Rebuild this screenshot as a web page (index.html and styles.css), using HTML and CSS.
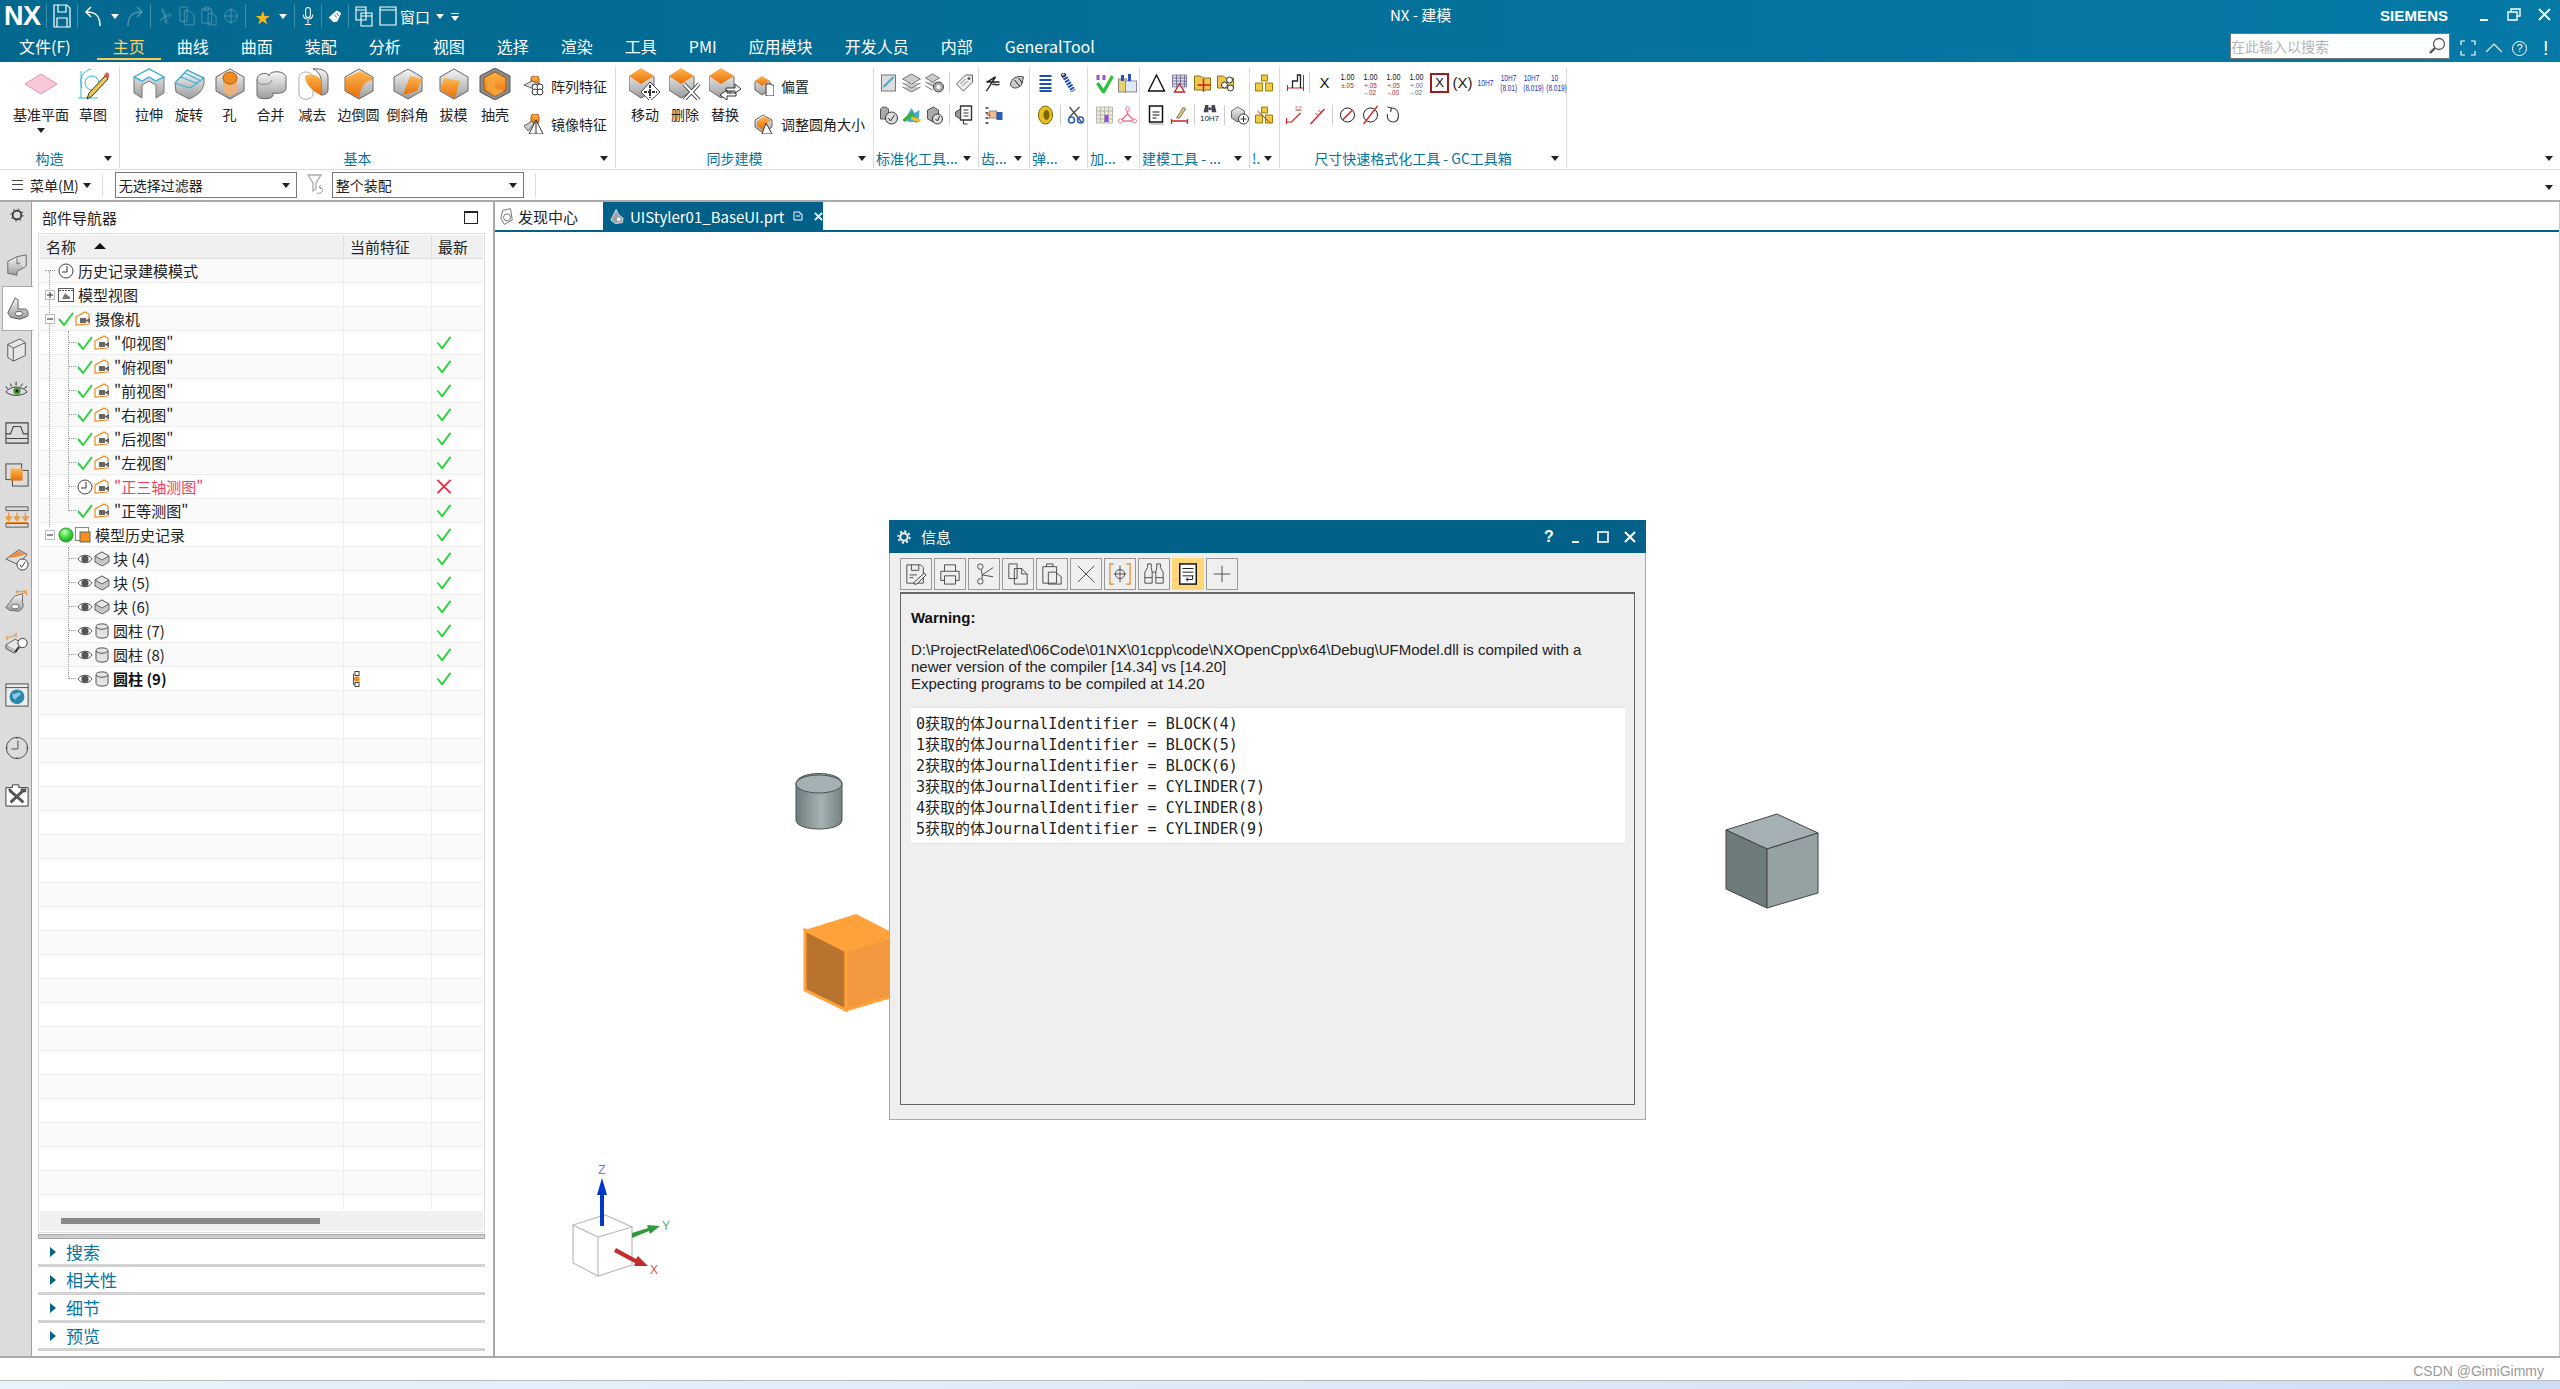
FILE: index.html
```html
<!DOCTYPE html>
<html lang="zh">
<head>
<meta charset="utf-8">
<title>NX - 建模</title>
<link rel="stylesheet" href="styles.css">
</head>
<body>
<svg class="defs" width="0" height="0" aria-hidden="true">
  <defs>
    <linearGradient id="gg" x1="0" y1="0" x2="0" y2="1"><stop offset="0" stop-color="#f6f6f6"/><stop offset="1" stop-color="#9c9c9c"/></linearGradient>
    <linearGradient id="go" x1="0" y1="0" x2="0" y2="1"><stop offset="0" stop-color="#ffb650"/><stop offset="1" stop-color="#e86f08"/></linearGradient>
    <linearGradient id="gc" x1="0" y1="0" x2="1" y2="0"><stop offset="0" stop-color="#6f7b7d"/><stop offset=".55" stop-color="#a6b2b3"/><stop offset="1" stop-color="#76827f"/></linearGradient>
    <radialGradient id="gd" cx=".4" cy=".3" r=".8"><stop offset="0" stop-color="#c8ffc0"/><stop offset=".5" stop-color="#3fd63a"/><stop offset="1" stop-color="#129a1c"/></radialGradient>

    <symbol id="s-datum" viewBox="0 0 32 32"><path d="M0 16 16 6 32 16 16 26Z" fill="#f8c8da" stroke="#e58fb2"/></symbol>
    <symbol id="s-sketch" viewBox="0 0 32 32"><path d="M14 1C5 3 2 12 5 20M4 30V3M1 30h20" fill="none" stroke="#35b4dc"/><circle cx="15" cy="15" r="7" fill="none" stroke="#35b4dc"/><path d="M28 8 31 11 15 28 10 31 12 25Z" fill="#f4c64c" stroke="#333"/><path d="M27 7 30 4 33 7 31 11Z" fill="#e06060"/></symbol>
    <symbol id="s-extrude" viewBox="0 0 32 32"><path d="M1 9 16 1 31 9V25L23 30V17L16 13 9 17V30L1 25Z" fill="url(#gg)" stroke="#777"/><path d="M1 9 16 1 31 9 23 13 16 9 9 13Z" fill="#fff" stroke="#35b4dc" stroke-width="1.4"/></symbol>
    <symbol id="s-revolve" viewBox="0 0 32 32"><path d="M2 15 14 2 31 10V15C30 23 24 28 16 31L3 24Z" fill="url(#gg)" stroke="#777"/><path d="M2 15 14 2 31 10 17 20Z M8 9 25 16M12 5 28 13" fill="none" stroke="#35b4dc" stroke-width="1.2"/></symbol>
    <symbol id="s-hole" viewBox="0 0 32 32"><path d="M16 1 30 9V23L16 31 2 23V9Z" fill="url(#gg)" stroke="#666"/><path d="M9 11V24L16 28 23 24V11Z" fill="#ebb27a"/><ellipse cx="16" cy="10" rx="7" ry="6" fill="#f28a1e" stroke="#b25a0a"/></symbol>
    <symbol id="s-unite" viewBox="0 0 32 32"><path d="M2 12C2 4 14 4 14 8 14 2 31 2 31 10V20C31 25 24 26 18 25V27C18 32 2 32 2 27Z" fill="url(#gg)" stroke="#666"/><path d="M2 12C2 18 16 18 17 12" fill="none" stroke="#888"/></symbol>
    <symbol id="s-subtract" viewBox="0 0 32 32"><path d="M2 10C2 2 16 2 16 10V26C16 33 2 33 2 26Z" fill="#fff" stroke="#aaa"/><path d="M16 1C22 0 31 2 31 9V22C31 25 28 27 24 27V12C24 7 20 2 16 1Z" fill="url(#gg)" stroke="#666"/><path d="M8 8C14 4 24 8 24 14V27C16 24 8 16 8 8Z" fill="url(#go)"/></symbol>
    <symbol id="s-blend" viewBox="0 0 32 32"><path d="M16 1 30 9V23L16 31 2 23V9Z" fill="url(#gg)" stroke="#666"/><path d="M3 10 17 3 29 9V12C22 13 17 20 16 30L3 23Z" fill="url(#go)"/></symbol>
    <symbol id="s-chamfer" viewBox="0 0 32 32"><path d="M16 1 30 9V23L16 31 2 23V9Z" fill="url(#gg)" stroke="#666"/><path d="M18 8 30 11 25 23 11 27Z" fill="url(#go)"/></symbol>
    <symbol id="s-draft" viewBox="0 0 32 32"><path d="M16 1 30 9V23L16 31 2 23V9Z" fill="url(#gg)" stroke="#666"/><path d="M6 10 22 13 17 30 2 22Z" fill="url(#go)"/></symbol>
    <symbol id="s-shell" viewBox="0 0 32 32"><path d="M16 0 31 8V24L16 32 1 24V8Z" fill="#8a8a8a" stroke="#555"/><path d="M16 4 27 10V22L16 28 5 22V10Z" fill="url(#go)" stroke="#a85406"/><path d="M10 12 16 9V20L25 23 16 28 7 22Z" fill="#f9a23a"/></symbol>
    <symbol id="s-move" viewBox="0 0 32 32"><path d="M12 2 25 9V22L12 30 0 22V9Z" fill="url(#gg)" stroke="#666"/><path d="M12 0 25 8 12 16 0 8Z" fill="url(#go)"/><path d="M21 14 31 24 21 33 12 24Z" fill="#fff" stroke="#444"/><path d="M21 17V30M15 24H28" stroke="#333" stroke-width="2" stroke-dasharray="3 1"/></symbol>
    <symbol id="s-delete" viewBox="0 0 32 32"><path d="M12 2 25 9V22L12 30 0 22V9Z" fill="url(#gg)" stroke="#666"/><path d="M12 0 25 8 12 16 0 8Z" fill="url(#go)"/><path d="M15 16 30 32M30 16 15 32" stroke="#444" stroke-width="4"/><path d="M15 16 30 32M30 16 15 32" stroke="#fff" stroke-width="2"/></symbol>
    <symbol id="s-replace" viewBox="0 0 32 32"><path d="M12 2 25 9V22L12 30 0 22V9Z" fill="url(#gg)" stroke="#666"/><path d="M12 0 25 8 12 16 0 8Z" fill="url(#go)"/><path d="M17 20H26V16L32 21 26 25V23H17ZM27 25H18V22L11 27 18 32V28H27Z" fill="#fff" stroke="#333"/></symbol>
    <symbol id="s-offset" viewBox="0 0 20 20"><path d="M8 1 16 6V14L8 19 1 14V6Z" fill="url(#gg)" stroke="#666"/><path d="M8 0 16 5 8 10 1 5Z" fill="url(#go)"/><path d="M12 8H17L20 10V20H12Z" fill="#fff" stroke="#333"/></symbol>
    <symbol id="s-resize" viewBox="0 0 20 20"><path d="M9 1 18 6V13L9 19 1 13V6Z" fill="url(#gg)" stroke="#666"/><path d="M3 7 11 2 17 7C13 8 10 11 9 16L3 12Z" fill="url(#go)"/><path d="M12 9 18 20H8Z" fill="#fff" stroke="#333"/></symbol>
    <symbol id="s-pattern" viewBox="0 0 20 20"><rect x="7" y="0" width="8" height="10" rx="3" fill="url(#go)" stroke="#b25a0a"/><path d="M0 9 8 5 18 9 10 13Z" fill="#ddd" stroke="#666"/><circle cx="11" cy="11" r="3" fill="#fff" stroke="#333"/><circle cx="16" cy="11" r="3" fill="#fff" stroke="#333"/><circle cx="11" cy="16" r="3" fill="#fff" stroke="#333"/><circle cx="16" cy="16" r="3" fill="#fff" stroke="#333"/></symbol>
    <symbol id="s-mirror" viewBox="0 0 20 20"><rect x="7" y="0" width="8" height="10" rx="3" fill="url(#go)" stroke="#b25a0a"/><path d="M0 12 8 7 10 10 4 17Z" fill="#ccc" stroke="#666"/><path d="M12 6 19 20H5Z" fill="#fff" stroke="#333"/><path d="M12 6V20" stroke="#333"/></symbol>

    <symbol id="t-check" viewBox="0 0 16 16"><path d="M1 8 6 14 15 2" fill="none" stroke="#2ad23c" stroke-width="2"/></symbol>
    <symbol id="t-x" viewBox="0 0 16 16"><path d="M1 1 15 15M15 1 1 15" stroke="#f02a3c" stroke-width="2"/></symbol>
    <symbol id="t-clock" viewBox="0 0 16 16"><circle cx="8" cy="8" r="7" fill="#fff" stroke="#444"/><path d="M9 3V9H4" fill="none" stroke="#333"/></symbol>
    <symbol id="t-cam" viewBox="0 0 16 16"><path d="M1 6 10 1 14 3V13L1 14Z" fill="#fff" stroke="#ee8a1c" stroke-width="1.2"/><path d="M5 7H11V12H5ZM11 9 15 7V12L11 10Z" fill="#666"/></symbol>
    <symbol id="t-view" viewBox="0 0 16 16"><rect x=".5" y="1.5" width="15" height="13" fill="#fff" stroke="#555"/><path d="M1 3.5H15" stroke="#555" stroke-dasharray="2 1"/><path d="M4 12 7 6 9 8 12 10V12Z" fill="#777"/></symbol>
    <symbol id="t-hist" viewBox="0 0 16 16"><rect x=".5" y=".5" width="13" height="13" fill="#fff" stroke="#888"/><rect x="5" y="5" width="10" height="10" fill="#f4901e" stroke="#666"/></symbol>
    <symbol id="t-eye" viewBox="0 0 16 16"><path d="M1 8C4 3 12 3 15 8 12 13 4 13 1 8Z" fill="#fff" stroke="#555"/><circle cx="8" cy="8" r="3.6" fill="#555"/></symbol>
    <symbol id="t-block" viewBox="0 0 16 16"><path d="M8 1 15 5V11L8 15 1 11V5Z" fill="#c8c8c8" stroke="#666"/><path d="M1 5 8 9 15 5 8 1Z" fill="#e8e8e8" stroke="#666"/></symbol>
    <symbol id="t-cyl" viewBox="0 0 16 16"><path d="M2 3.5C2 0 14 0 14 3.5V12.5C14 16 2 16 2 12.5Z" fill="#e2e2e2" stroke="#555"/><path d="M2 4C4 7 12 7 14 4" fill="none" stroke="#555"/></symbol>
    <symbol id="t-node" viewBox="0 0 8 16"><path d="M1.5 2.5V13.5H3M1.5 8H3" fill="none" stroke="#555"/><rect x="3" y=".5" width="4" height="4" fill="#fff" stroke="#444"/><rect x="3" y="6" width="4" height="4" fill="#f08a1c" stroke="#f08a1c"/><rect x="3" y="11.5" width="4" height="4" fill="#fff" stroke="#444"/></symbol>
  </defs>
</svg>

<div class="app">
  <header class="head">
    <div class="titlebar">
      <span class="logo">NX</span>
      <span class="qsep"></span>
      <svg class="qi" viewBox="0 0 18 24"><path d="M1 1H14L17 4V23H1ZM5 1V8H13V1M4 14H14V23H4Z" fill="none" stroke="#fff" stroke-width="1.2"/></svg>
      <span class="qsep"></span>
      <svg class="qi" viewBox="0 0 18 24"><path d="M16 22C16 12 12 8 3 8M7 3 2 8 7 13" fill="none" stroke="#fff" stroke-width="1.5"/></svg>
      <span class="tri tri-w"></span>
      <svg class="qi faded" viewBox="0 0 18 24"><path d="M2 22C2 12 6 8 15 8M11 3 16 8 11 13" fill="none" stroke="#fff" stroke-width="1.5"/></svg>
      <span class="qsep"></span>
      <svg class="qi faded n" viewBox="0 0 18 24"><path d="M9 12C2 2 8 0 9 12 18 6 18 14 9 12 4 20 0 18 9 12 14 22 8 24 9 12" fill="none" stroke="#fff"/></svg>
      <svg class="qi faded n" viewBox="0 0 18 24"><path d="M1 2H9V18H1ZM6 6H12L17 11V22H6Z" fill="none" stroke="#fff"/></svg>
      <svg class="qi faded n" viewBox="0 0 18 24"><path d="M1 4H12V20H1ZM4 2H9V6H4ZM8 9H13L17 13V22H8Z" fill="none" stroke="#fff"/></svg>
      <svg class="qi faded n" viewBox="0 0 18 24"><circle cx="9" cy="12" r="7" fill="none" stroke="#fff"/><path d="M1 12H17M9 3V21" stroke="#fff"/></svg>
      <span class="qsep"></span>
      <span class="star">★</span>
      <span class="tri tri-w"></span>
      <span class="qsep"></span>
      <svg class="qi m14" viewBox="0 0 18 24"><rect x="6" y="1" width="6" height="13" rx="3" fill="none" stroke="#fff" stroke-width="1.3"/><path d="M3 10C3 18 15 18 15 10M9 17V22M5 23H13" fill="none" stroke="#fff" stroke-width="1.3"/></svg>
      <span class="qsep"></span>
      <svg class="qi m14" viewBox="0 0 18 24"><path d="M1 14 11 5 17 8 12 19 7 20Z" fill="#fff"/><path d="M8 10 11 14M11 8 14 12" stroke="#04698f"/></svg>
      <span class="qsep"></span>
      <svg class="qi" viewBox="0 0 18 24"><path d="M1 3H11V16H1ZM1 6H11M6 9H17V22H6ZM6 12H17" fill="none" stroke="#fff" stroke-width="1.1"/></svg>
      <svg class="qi" viewBox="0 0 18 24"><path d="M1 3H17V21H1ZM1 6H17" fill="none" stroke="#fff" stroke-width="1.2"/></svg>
      <span class="wintext">窗口</span>
      <span class="tri tri-w"></span>
      <span class="menu-more"></span>
      <span class="apptitle">NX - 建模</span>
      <span class="brand">SIEMENS</span>
      <div class="winbtns">
        <svg class="wb" viewBox="0 0 14 14"><path d="M3 12H11" stroke="#fff" stroke-width="2"/></svg>
        <svg class="wb" viewBox="0 0 14 14"><path d="M4 4V1H13V8H10M1 4H10V12H1Z" fill="none" stroke="#fff" stroke-width="1.4"/></svg>
        <svg class="wb" viewBox="0 0 14 14"><path d="M2 1 13 12M13 1 2 12" stroke="#fff" stroke-width="1.8"/></svg>
      </div>
    </div>
    <div class="tabrow">
      <nav class="tabs">
        <a class="tab file">文件(F)</a>
        <a class="tab active">主页</a>
        <a class="tab">曲线</a>
        <a class="tab">曲面</a>
        <a class="tab">装配</a>
        <a class="tab">分析</a>
        <a class="tab">视图</a>
        <a class="tab">选择</a>
        <a class="tab">渲染</a>
        <a class="tab">工具</a>
        <a class="tab">PMI</a>
        <a class="tab">应用模块</a>
        <a class="tab">开发人员</a>
        <a class="tab">内部</a>
        <a class="tab">GeneralTool</a>
      </nav>
      <div class="searchbox">
        <span>在此输入以搜索</span>
        <svg class="mag" viewBox="0 0 18 18"><circle cx="11" cy="7" r="5.5" fill="#fff" stroke="#555" stroke-width="1.3"/><path d="M7 11 2 16" stroke="#555" stroke-width="2.4"/></svg>
      </div>
      <div class="helpers">
        <svg class="hb" viewBox="0 0 16 16"><path d="M1 5V1H5M11 1H15V5M15 11V15H11M5 15H1V11" fill="none" stroke="#fff" stroke-width="1.2"/></svg>
        <svg class="hb" viewBox="0 0 16 16"><path d="M0 12 8 4 16 12" fill="none" stroke="#fff" stroke-width="1.2"/></svg>
        <span class="helpq">?</span>
        <span class="helpex">!</span>
      </div>
    </div>
  </header>

  <section class="ribbon">
    <div class="group g-con">
      <div class="tools pad-con">
        <div class="big w56"><svg class="bi"><use href="#s-datum"/></svg><span>基准平面</span><i class="tri tri-k drop"></i></div>
        <div class="big w48"><svg class="bi"><use href="#s-sketch"/></svg><span>草图</span></div>
      </div>
      <div class="glabel"><b>构造</b><i class="tri tri-k"></i></div>
    </div>
    <div class="group g-base">
      <div class="tools pad-big">
        <div class="big w40"><svg class="bi"><use href="#s-extrude"/></svg><span>拉伸</span></div>
        <div class="big w40"><svg class="bi"><use href="#s-revolve"/></svg><span>旋转</span></div>
        <div class="big w41"><svg class="bi"><use href="#s-hole"/></svg><span>孔</span></div>
        <div class="big w41"><svg class="bi"><use href="#s-unite"/></svg><span>合并</span></div>
        <div class="big w43"><svg class="bi"><use href="#s-subtract"/></svg><span>减去</span></div>
        <div class="big w49"><svg class="bi"><use href="#s-blend"/></svg><span>边倒圆</span></div>
        <div class="big w49"><svg class="bi"><use href="#s-chamfer"/></svg><span>倒斜角</span></div>
        <div class="big w43"><svg class="bi"><use href="#s-draft"/></svg><span>拔模</span></div>
        <div class="big w40"><svg class="bi"><use href="#s-shell"/></svg><span>抽壳</span></div>
        <div class="stack">
          <div class="srow"><svg class="si"><use href="#s-pattern"/></svg><span>阵列特征</span></div>
          <div class="srow"><svg class="si"><use href="#s-mirror"/></svg><span>镜像特征</span></div>
        </div>
      </div>
      <div class="glabel"><b>基本</b><i class="tri tri-k"></i></div>
    </div>
    <div class="group g-sync">
      <div class="tools pad-big">
        <div class="big w40"><svg class="bi"><use href="#s-move"/></svg><span>移动</span></div>
        <div class="big w40"><svg class="bi"><use href="#s-delete"/></svg><span>删除</span></div>
        <div class="big w40"><svg class="bi"><use href="#s-replace"/></svg><span>替换</span></div>
        <div class="stack">
          <div class="srow"><svg class="si"><use href="#s-offset"/></svg><span>偏置</span></div>
          <div class="srow"><svg class="si"><use href="#s-resize"/></svg><span>调整圆角大小</span></div>
        </div>
      </div>
      <div class="glabel"><b>同步建模</b><i class="tri tri-k"></i></div>
    </div>
    <div class="group g-std">
      <div class="minis p3">
        <div class="mrow">
          <svg class="m" viewBox="0 0 20 20"><rect x="3" y="2" width="14" height="16" fill="#ddd" stroke="#777"/><path d="M5 14 15 4" stroke="#4aa8c8" stroke-width="2"/></svg>
          <svg class="m" viewBox="0 0 20 20"><path d="M10 1 19 6 10 11 1 6ZM1 10 10 15 19 10M1 14 10 19 19 14" fill="#ccc" stroke="#777"/></svg>
          <svg class="m" viewBox="0 0 20 20"><path d="M8 1 15 5 8 9 1 5ZM1 9 8 13 15 9M1 13 8 17" fill="#ccc" stroke="#777"/><circle cx="14" cy="14" r="5" fill="#aaa" stroke="#444"/><circle cx="14" cy="14" r="2" fill="#fff"/></svg>
          <i class="vs"></i>
          <svg class="m" viewBox="0 0 20 20"><path d="M2 11 11 2H18V9L9 18Z" fill="#eee" stroke="#666"/><circle cx="14.5" cy="5.5" r="1.5" fill="#666"/><path d="M6 11 11 6M8 13 13 8" stroke="#888"/></svg>
        </div>
        <div class="mrow">
          <svg class="m" viewBox="0 0 20 20"><path d="M2 5C2 1 10 1 10 5V14H2Z" fill="#aaa" stroke="#555"/><circle cx="13" cy="13" r="6" fill="#ddd" stroke="#333"/><path d="M10 13 12 16 16 10" fill="none" stroke="#333"/></svg>
          <svg class="m" viewBox="0 0 20 20"><path d="M3 15 10 3 13 8 18 5 17 17H8Z" fill="#46a8d8"/><path d="M2 16 10 9 16 17" fill="none" stroke="#38b030" stroke-width="3"/><path d="M10 13 19 16" stroke="#f0c020" stroke-width="3"/></svg>
          <svg class="m" viewBox="0 0 20 20"><path d="M3 5 9 2 14 5V14L9 17 3 14Z" fill="#aaa" stroke="#555"/><circle cx="13" cy="14" r="5" fill="#ddd" stroke="#333"/><path d="M11 14 13 16 15 11" fill="none" stroke="#333"/></svg>
          <i class="vs"></i>
          <svg class="m" viewBox="0 0 20 20"><path d="M6 1H17V15H6Z" fill="#fff" stroke="#333" stroke-width="1.4"/><path d="M1 7 6 4V14L1 11Z" fill="#999" stroke="#444"/><path d="M9 5H14M9 8H14M9 11H14M9 15V19H13" fill="none" stroke="#333"/></svg>
        </div>
      </div>
      <div class="glabel narrow"><b>标准化工具...</b><i class="tri tri-k"></i></div>
    </div>
    <div class="group g-gear">
      <div class="minis p3">
        <div class="mrow">
          <svg class="m" viewBox="0 0 20 20"><path d="M3 18C6 14 9 8 12 4 8 6 6 8 3 9H16M9 12C11 9 12 14 16 11" fill="none" stroke="#222" stroke-width="1.4"/></svg>
          <svg class="m" viewBox="0 0 20 20"><path d="M4 12C4 5 12 2 17 4L15 12C12 15 7 17 4 12Z" fill="#ccc" stroke="#444"/><path d="M8 7 13 13M12 5 16 10" stroke="#222"/></svg>
        </div>
        <div class="mrow">
          <svg class="m" viewBox="0 0 20 20"><path d="M2 3H5M2 8H5M2 13H5M2 18H5" stroke="#333" stroke-width="1.3"/><rect x="6" y="6" width="7" height="7" fill="#f3c08a" stroke="#a87"/><rect x="13" y="7" width="6" height="8" fill="#2a5fb8"/><path d="M7 10H3" stroke="#d22"/></svg>
        </div>
      </div>
      <div class="glabel narrow"><b>齿...</b><i class="tri tri-k"></i></div>
    </div>
    <div class="group g-spring">
      <div class="minis p4">
        <div class="mrow">
          <svg class="m" viewBox="0 0 20 20"><path d="M4 3H16M4 7H16M4 11H16M4 15H16M4 18H16" stroke="#1c50b8" stroke-width="2"/></svg>
          <svg class="m" viewBox="0 0 20 20"><path d="M5 2 15 18" stroke="#1c50b8" stroke-width="5" stroke-dasharray="2 1"/><circle cx="5" cy="2" r="2" fill="none" stroke="#222"/></svg>
        </div>
        <div class="mrow">
          <svg class="m" viewBox="0 0 20 20"><ellipse cx="10" cy="10" rx="7" ry="9" fill="#e8c018" stroke="#7a6408"/><ellipse cx="11" cy="10" rx="3" ry="5" fill="#7a6408"/></svg>
          <i class="vs"></i>
          <svg class="m" viewBox="0 0 20 20"><path d="M4 2 16 17M14 2 4 12" stroke="#555" stroke-width="1.5"/><circle cx="6" cy="15" r="3" fill="none" stroke="#2a5fb8" stroke-width="1.6"/><circle cx="15" cy="15" r="3" fill="none" stroke="#2a5fb8" stroke-width="1.6"/></svg>
        </div>
      </div>
      <div class="glabel narrow"><b>弹...</b><i class="tri tri-k"></i></div>
    </div>
    <div class="group g-add">
      <div class="minis p5">
        <div class="mrow">
          <svg class="m" viewBox="0 0 20 20"><path d="M3 10 9 19 18 3" fill="none" stroke="#2fc040" stroke-width="3.4"/><path d="M2 2H5V7H2ZM8 2H11V7H8Z" fill="#a050d0"/></svg>
          <svg class="m" viewBox="0 0 20 20"><rect x="1" y="6" width="8" height="13" fill="#e8d070" stroke="#888"/><rect x="8" y="8" width="11" height="11" fill="#dfe8f4" stroke="#88a"/><path d="M5 2V8M12 1V8" stroke="#3050c0" stroke-width="3"/></svg>
        </div>
        <div class="mrow">
          <svg class="m" viewBox="0 0 20 20"><path d="M2 2H18V18H2ZM2 6H18M2 10H18M2 14H18M6 2V18M10 2V18M14 2V18" fill="#f2ead0" stroke="#aaa" stroke-width=".8"/><path d="M12 10V17" stroke="#9050d0" stroke-width="4"/></svg>
          <svg class="m" viewBox="0 0 20 20"><path d="M10 2V9L3 16M10 9 17 16M3 16H17" fill="none" stroke="#e87890" stroke-width="1.6"/><circle cx="10" cy="4" r="2" fill="#fff" stroke="#e87890"/><circle cx="3" cy="16" r="2" fill="#fff" stroke="#e87890"/><circle cx="17" cy="16" r="2" fill="#fff" stroke="#e87890"/></svg>
        </div>
      </div>
      <div class="glabel narrow"><b>加...</b><i class="tri tri-k"></i></div>
    </div>
    <div class="group g-model">
      <div class="minis p5">
        <div class="mrow">
          <svg class="m" viewBox="0 0 20 20"><path d="M10 2 18 18H2Z" fill="#fff" stroke="#111" stroke-width="1.4"/></svg>
          <svg class="m" viewBox="0 0 20 20"><path d="M3 2H17V14H3ZM3 5H17M3 8H17M3 11H17M7 2V14M11 2V14M15 2V14" fill="#ddd" stroke="#558" stroke-width=".7"/><path d="M10 11 15 19H5Z" fill="#fff" stroke="#c22" stroke-width="1.4"/></svg>
          <svg class="m" viewBox="0 0 20 20"><path d="M2 3H8L10 5H18V17H2Z" fill="#ecc84c" stroke="#8a7010"/><path d="M11 6V19M5 12H18" stroke="#c22" stroke-width="1.5"/></svg>
          <svg class="m" viewBox="0 0 20 20"><path d="M2 3H8L10 5H18V15H2Z" fill="#ecc84c" stroke="#8a7010"/><circle cx="9" cy="12" r="3" fill="#fff" stroke="#333"/><circle cx="15" cy="15" r="3" fill="#fff" stroke="#333"/><circle cx="14" cy="7" r="3" fill="#fff" stroke="#333"/></svg>
        </div>
        <div class="mrow">
          <svg class="m" viewBox="0 0 20 20"><path d="M3 1H16V17H3Z" fill="#fff" stroke="#111" stroke-width="1.5"/><path d="M6 7H13M6 10H13M6 13H10" stroke="#111"/><path d="M3 19H17" stroke="#999"/></svg>
          <svg class="m" viewBox="0 0 20 20"><path d="M2 14V19M18 14V19M2 16H18" stroke="#c22" stroke-width="1.3"/><path d="M7 13 14 2 16 4 10 13Z" fill="#e8c86a" stroke="#776"/></svg>
          <i class="vs"></i>
          <span class="m scope"><svg viewBox="0 0 20 11"><path d="M4 0H8V9H2ZM12 0H16L18 9H12Z" fill="#445"/><rect x="8" y="3" width="4" height="3" fill="#445"/></svg><em>10H7</em></span>
          <i class="vs"></i>
          <svg class="m" viewBox="0 0 20 20"><path d="M2 6 8 2 15 6V13L8 17 2 13Z" fill="url(#gg)" stroke="#666"/><circle cx="14" cy="14" r="5" fill="#fff" stroke="#333"/><path d="M14 11V17M11 14H17" stroke="#333"/></svg>
        </div>
      </div>
      <div class="glabel narrow"><b>建模工具 - ...</b><i class="tri tri-k"></i></div>
    </div>
    <div class="group g-ex">
      <div class="minis p3">
        <div class="mrow"><svg class="m" viewBox="0 0 20 20"><path d="M7 2H13V8H7Z" fill="#f0c83a" stroke="#9a7c10"/><path d="M1 10H8V18H1ZM11 10H18V18H11Z" fill="#f2cc44" stroke="#9a7c10"/></svg></div>
        <div class="mrow"><svg class="m" viewBox="0 0 20 20"><path d="M7 2H13V8H7Z" fill="#f0c83a" stroke="#9a7c10"/><path d="M1 10H8V18H1ZM11 10H18V18H11Z" fill="#f2cc44" stroke="#9a7c10"/><path d="M3 6 16 18" stroke="#c22"/></svg></div>
      </div>
      <div class="glabel narrow"><b>!.</b><i class="tri tri-k"></i></div>
    </div>
    <div class="group g-dim">
      <div class="minis p3">
        <div class="mrow">
          <svg class="m" viewBox="0 0 20 20"><path d="M3 12V18M19 2V18M3 15H19" stroke="#c22" fill="none"/><path d="M8 15V8H13V2H16V15" fill="none" stroke="#222" stroke-width="1.3"/></svg>
          <i class="vs"></i>
          <span class="m mx">X</span>
          <span class="m tol"><u>1.00</u><s>±.05</s></span>
          <span class="m tol"><u>1.00</u><s>+.05<br>-.02</s></span>
          <span class="m tol"><u>1.00</u><s>+.05<br>-.00</s></span>
          <span class="m tol"><u>1.00</u><s class="dimg">+.00<br>-.02</s></span>
          <span class="m mbox">X</span>
          <span class="m mpar">(X)</span>
          <span class="m fit">10H7</span>
          <span class="m fit2">10H7<br>(8.01)</span>
          <span class="m fit2">10H7<br>(8.019)</span>
          <span class="m fit2">10<br>(8.019)</span>
        </div>
        <div class="mrow">
          <svg class="m" viewBox="0 0 20 20"><path d="M2 17H7L16 8M2 13V19" fill="none" stroke="#c22" stroke-width="1.2"/><path d="M11 2H13M15 2H17M11 5H17" stroke="#c22"/></svg>
          <svg class="m" viewBox="0 0 20 20"><path d="M3 19 17 4" stroke="#c22" stroke-width="1.4"/><path d="M8 8 11 11M11 5 14 8" stroke="#c22"/></svg>
          <i class="vs"></i>
          <svg class="m" viewBox="0 0 20 20"><circle cx="10" cy="10" r="7" fill="#fff" stroke="#222"/><path d="M5 15 15 5" stroke="#c22" stroke-width="1.5"/></svg>
          <svg class="m" viewBox="0 0 20 20"><circle cx="10" cy="10" r="7" fill="none" stroke="#222"/><path d="M3 19 17 1" stroke="#c22" stroke-width="1.3"/></svg>
          <svg class="m" viewBox="0 0 20 20"><path d="M8 3C17 3 17 17 10 17 5 17 3 13 4 9M4 2 8 3 7 7" fill="none" stroke="#444" stroke-width="1.2"/></svg>
        </div>
      </div>
      <div class="glabel"><b>尺寸快速格式化工具 - GC工具箱</b><i class="tri tri-k"></i></div>
    </div>
    <i class="tri tri-k ribbon-drop"></i>
  </section>

  <section class="toolbar">
    <span class="hamb"></span>
    <span class="menutxt">菜单(<span class="ul">M</span>)</span>
    <i class="tri tri-k"></i>
    <i class="tsep"></i>
    <div class="select s1"><span>无选择过滤器</span><i class="tri tri-k"></i></div>
    <svg class="funnel" viewBox="0 0 20 24"><path d="M2 2H15L10 10V16L7 18V10Z" fill="none" stroke="#aaa" stroke-width="1.3"/><path d="M11 20C17 22 19 15 13 14M13 14 15 12M13 14 15 16" fill="none" stroke="#999"/></svg>
    <div class="select s2"><span>整个装配</span><i class="tri tri-k"></i></div>
    <i class="tsep"></i>
    <i class="tri tri-k toolbar-drop"></i>
  </section>

  <main class="main">
    <aside class="rail">
      <svg class="ri r-gear" viewBox="0 0 16 16"><circle cx="8" cy="8" r="5" fill="none" stroke="#333" stroke-width="2"/><circle cx="8" cy="8" r="7" fill="none" stroke="#333" stroke-dasharray="2 3.5"/></svg>
      <svg class="ri r-tall" viewBox="0 0 26 26"><path d="M3 9 13 4V12L20 9V16L13 20V24L3 22Z" fill="url(#gg)" stroke="#666"/><path d="M13 4 23 2V14L20 16" fill="#ddd" stroke="#666"/></svg>
      <div class="ractive"><svg class="ri-in" viewBox="0 0 26 26"><path d="M2 17 10 1 13 3V13H20C24 13 25 19 23 21L15 24 5 22Z" fill="url(#gg)" stroke="#555"/><ellipse cx="14" cy="18" rx="4" ry="2.5" fill="#fff" stroke="#555"/></svg></div>
      <svg class="ri r-book" viewBox="0 0 26 26"><path d="M3 7 16 1 22 5V19L9 25 3 21ZM3 7 9 11V25M9 11 22 5" fill="#e8e8e8" stroke="#555"/></svg>
      <svg class="ri" viewBox="0 0 26 26"><path d="M1 14C6 7 18 7 24 14 18 19 6 19 1 14Z" fill="#dde" stroke="#333"/><circle cx="13" cy="13" r="4" fill="#4c9a28"/><circle cx="13" cy="13" r="1.5" fill="#111"/><path d="M3 11 1 8M7 8 6 5M12 7V3M17 8 19 5M21 10 24 8" stroke="#222"/></svg>
      <svg class="ri" viewBox="0 0 26 26"><path d="M1 2H25V24H1ZM1 14H6L9 6H17L20 14H25V19H1" fill="none" stroke="#444" stroke-width="1.2"/></svg>
      <svg class="ri" viewBox="0 0 26 26"><rect x="1" y="1" width="17" height="17" fill="none" stroke="#444"/><rect x="8" y="8" width="17" height="17" fill="none" stroke="#444"/><rect x="6" y="6" width="13" height="13" fill="url(#go)"/></svg>
      <svg class="ri" viewBox="0 0 26 26"><path d="M1 2H25V6H1ZM1 20H25V24H1Z" fill="none" stroke="#555"/><path d="M4 8V15M1 13 4 17 7 13H1M13 8V15M10 13 13 17 16 13H10M22 8V15M19 13 22 17 25 13H19M1 19H25" fill="none" stroke="#ee8a1c" stroke-width="1.2"/></svg>
      <svg class="ri" viewBox="0 0 26 26"><path d="M1 13 15 3 24 8 14 19Z" fill="#ddd" stroke="#555"/><path d="M3 12 15 4 22 8 11 11Z" fill="#ef8c3a"/><circle cx="19" cy="19" r="6" fill="#fff" stroke="#333"/><path d="M16 19 18 22 22 16" fill="none" stroke="#333"/></svg>
      <svg class="ri" viewBox="0 0 26 26"><path d="M1 20 10 8 19 5V15C21 18 19 23 14 24L5 23Z" fill="url(#gg)" stroke="#666"/><ellipse cx="11" cy="19" rx="4" ry="2.5" fill="#fff" stroke="#666"/><path d="M12 5 14 1M12 3 22 3 24 7M20 1 24 5M24 1 20 5" fill="none" stroke="#ee8a1c"/></svg>
      <svg class="ri" viewBox="0 0 26 26"><path d="M1 15 11 9 22 14 11 22Z" fill="#e8e8e8" stroke="#555"/><path d="M1 15V19L10 24 14 21" fill="#bbb" stroke="#555"/><circle cx="19" cy="13" r="5" fill="#fff" stroke="#333"/><path d="M15 17 11 23" stroke="#333" stroke-width="2"/><path d="M2 8 12 4M2 5V10M12 2V7" stroke="#ee8a1c" fill="none"/></svg>
      <svg class="ri r-gap" viewBox="0 0 26 26"><rect x="1" y="1" width="24" height="24" fill="#eee" stroke="#444"/><path d="M1 5H25" stroke="#444"/><circle cx="13" cy="15" r="8" fill="#2a88ac"/><path d="M8 11C12 13 14 9 17 11 17 15 12 14 12 18 8 17 8 14 8 11Z" fill="#8cc8de"/></svg>
      <svg class="ri r-gap" viewBox="0 0 26 26"><circle cx="13" cy="13" r="11.5" fill="none" stroke="#444"/><path d="M14 5V14H7M13 1V3M13 23V25M1 13H3M23 13H25" fill="none" stroke="#444"/></svg>
      <svg class="ri r-tools" viewBox="0 0 26 26"><path d="M1 5H8V2H15V5H25V25H1Z" fill="#fff" stroke="#333"/><path d="M5 8 20 21M20 8 6 21" stroke="#555" stroke-width="3"/><path d="M17 6H23V10H17ZM3 7C6 5 9 8 7 11" fill="#555"/></svg>
    </aside>

    <section class="nav">
      <div class="navhead"><span>部件导航器</span><i class="maxbtn"></i></div>
      <div class="table">
        <div class="thead">
          <div class="th th1">名称<i class="sort"></i></div>
          <div class="th">当前特征</div>
          <div class="th">最新</div>
        </div>
        <div class="tree">
          <i class="vline v1"></i><i class="vline v2"></i><i class="vline v3"></i>
          <div class="row"><div class="c name"><i class="exp none"></i><svg class="i1"><use href="#t-clock"/></svg><span class="t0">历史记录建模模式</span></div><div class="c"></div><div class="c"></div></div>
          <div class="row"><div class="c name"><i class="exp plus"></i><svg class="i1"><use href="#t-view"/></svg><span class="t0">模型视图</span></div><div class="c"></div><div class="c"></div></div>
          <div class="row"><div class="c name"><i class="exp minus"></i><svg class="i1"><use href="#t-check"/></svg><svg class="i2"><use href="#t-cam"/></svg><span class="t1">摄像机</span></div><div class="c"></div><div class="c"></div></div>
          <div class="row"><div class="c name lv"><i class="dash"></i><svg class="i1"><use href="#t-check"/></svg><svg class="i2"><use href="#t-cam"/></svg><span class="t2">"仰视图"</span></div><div class="c"></div><div class="c ok"><svg><use href="#t-check"/></svg></div></div>
          <div class="row"><div class="c name lv"><i class="dash"></i><svg class="i1"><use href="#t-check"/></svg><svg class="i2"><use href="#t-cam"/></svg><span class="t2">"俯视图"</span></div><div class="c"></div><div class="c ok"><svg><use href="#t-check"/></svg></div></div>
          <div class="row"><div class="c name lv"><i class="dash"></i><svg class="i1"><use href="#t-check"/></svg><svg class="i2"><use href="#t-cam"/></svg><span class="t2">"前视图"</span></div><div class="c"></div><div class="c ok"><svg><use href="#t-check"/></svg></div></div>
          <div class="row"><div class="c name lv"><i class="dash"></i><svg class="i1"><use href="#t-check"/></svg><svg class="i2"><use href="#t-cam"/></svg><span class="t2">"右视图"</span></div><div class="c"></div><div class="c ok"><svg><use href="#t-check"/></svg></div></div>
          <div class="row"><div class="c name lv"><i class="dash"></i><svg class="i1"><use href="#t-check"/></svg><svg class="i2"><use href="#t-cam"/></svg><span class="t2">"后视图"</span></div><div class="c"></div><div class="c ok"><svg><use href="#t-check"/></svg></div></div>
          <div class="row"><div class="c name lv"><i class="dash"></i><svg class="i1"><use href="#t-check"/></svg><svg class="i2"><use href="#t-cam"/></svg><span class="t2">"左视图"</span></div><div class="c"></div><div class="c ok"><svg><use href="#t-check"/></svg></div></div>
          <div class="row"><div class="c name lv"><i class="dash"></i><svg class="i1"><use href="#t-clock"/></svg><svg class="i2"><use href="#t-cam"/></svg><span class="t2 red">"正三轴测图"</span></div><div class="c"></div><div class="c ok"><svg><use href="#t-x"/></svg></div></div>
          <div class="row"><div class="c name lv"><i class="dash"></i><svg class="i1"><use href="#t-check"/></svg><svg class="i2"><use href="#t-cam"/></svg><span class="t2">"正等测图"</span></div><div class="c"></div><div class="c ok"><svg><use href="#t-check"/></svg></div></div>
          <div class="row"><div class="c name"><i class="exp minus"></i><svg class="i1 dot" viewBox="0 0 18 18"><circle cx="9" cy="9" r="7" fill="url(#gd)" stroke="#1a9a20"/></svg><svg class="i2"><use href="#t-hist"/></svg><span class="t1">模型历史记录</span></div><div class="c"></div><div class="c ok"><svg><use href="#t-check"/></svg></div></div>
          <div class="row"><div class="c name lv"><i class="dash"></i><svg class="i1"><use href="#t-eye"/></svg><svg class="i2"><use href="#t-block"/></svg><span class="t3">块 (4)</span></div><div class="c"></div><div class="c ok"><svg><use href="#t-check"/></svg></div></div>
          <div class="row"><div class="c name lv"><i class="dash"></i><svg class="i1"><use href="#t-eye"/></svg><svg class="i2"><use href="#t-block"/></svg><span class="t3">块 (5)</span></div><div class="c"></div><div class="c ok"><svg><use href="#t-check"/></svg></div></div>
          <div class="row"><div class="c name lv"><i class="dash"></i><svg class="i1"><use href="#t-eye"/></svg><svg class="i2"><use href="#t-block"/></svg><span class="t3">块 (6)</span></div><div class="c"></div><div class="c ok"><svg><use href="#t-check"/></svg></div></div>
          <div class="row"><div class="c name lv"><i class="dash"></i><svg class="i1"><use href="#t-eye"/></svg><svg class="i2"><use href="#t-cyl"/></svg><span class="t3">圆柱 (7)</span></div><div class="c"></div><div class="c ok"><svg><use href="#t-check"/></svg></div></div>
          <div class="row"><div class="c name lv"><i class="dash"></i><svg class="i1"><use href="#t-eye"/></svg><svg class="i2"><use href="#t-cyl"/></svg><span class="t3">圆柱 (8)</span></div><div class="c"></div><div class="c ok"><svg><use href="#t-check"/></svg></div></div>
          <div class="row"><div class="c name lv"><i class="dash"></i><svg class="i1"><use href="#t-eye"/></svg><svg class="i2"><use href="#t-cyl"/></svg><span class="t3 strong">圆柱 (9)</span></div><div class="c cur"><svg><use href="#t-node"/></svg></div><div class="c ok"><svg><use href="#t-check"/></svg></div></div>
          <div class="row"><div class="c"></div><div class="c"></div><div class="c"></div></div>
          <div class="row"><div class="c"></div><div class="c"></div><div class="c"></div></div>
          <div class="row"><div class="c"></div><div class="c"></div><div class="c"></div></div>
          <div class="row"><div class="c"></div><div class="c"></div><div class="c"></div></div>
          <div class="row"><div class="c"></div><div class="c"></div><div class="c"></div></div>
          <div class="row"><div class="c"></div><div class="c"></div><div class="c"></div></div>
          <div class="row"><div class="c"></div><div class="c"></div><div class="c"></div></div>
          <div class="row"><div class="c"></div><div class="c"></div><div class="c"></div></div>
          <div class="row"><div class="c"></div><div class="c"></div><div class="c"></div></div>
          <div class="row"><div class="c"></div><div class="c"></div><div class="c"></div></div>
          <div class="row"><div class="c"></div><div class="c"></div><div class="c"></div></div>
          <div class="row"><div class="c"></div><div class="c"></div><div class="c"></div></div>
          <div class="row"><div class="c"></div><div class="c"></div><div class="c"></div></div>
          <div class="row"><div class="c"></div><div class="c"></div><div class="c"></div></div>
          <div class="row"><div class="c"></div><div class="c"></div><div class="c"></div></div>
          <div class="row"><div class="c"></div><div class="c"></div><div class="c"></div></div>
          <div class="row"><div class="c"></div><div class="c"></div><div class="c"></div></div>
          <div class="row"><div class="c"></div><div class="c"></div><div class="c"></div></div>
          <div class="row"><div class="c"></div><div class="c"></div><div class="c"></div></div>
          <div class="row"><div class="c"></div><div class="c"></div><div class="c"></div></div>
          <div class="row"><div class="c"></div><div class="c"></div><div class="c"></div></div>
          <div class="row"><div class="c"></div><div class="c"></div><div class="c"></div></div>
        </div>
        <div class="hscroll"><i class="thumb"></i></div>
      </div>
      <div class="splitter"></div>
      <div class="acc"><i class="arrow"></i>搜索</div>
      <div class="acc"><i class="arrow"></i>相关性</div>
      <div class="acc"><i class="arrow"></i>细节</div>
      <div class="acc"><i class="arrow"></i>预览</div>
    </section>

    <section class="graphics">
      <div class="gtabs">
        <div class="gtab">
          <svg class="gt-ic" viewBox="0 0 16 20"><path d="M3 3 12 1 14 14 5 19 1 12Z" fill="none" stroke="#666"/><circle cx="8" cy="11" r="4" fill="none" stroke="#666"/></svg>
          <span>发现中心</span>
        </div>
        <div class="gtab on">
          <svg class="gt-ic" viewBox="0 0 16 20"><path d="M1 14 7 2 10 8 15 12 14 17 6 18Z" fill="#9aa4a8" stroke="#e8e8e8"/><circle cx="10" cy="13" r="2" fill="#fff"/></svg>
          <span>UIStyler01_BaseUI.prt</span>
          <svg class="gt-doc" viewBox="0 0 10 10"><path d="M1 1H7V3H9V9H1Z" fill="none" stroke="#fff"/><path d="M3 5H7" stroke="#fff"/></svg>
          <svg class="gt-x" viewBox="0 0 10 10"><path d="M1 1 9 9M9 1 1 9" stroke="#fff" stroke-width="2"/></svg>
        </div>
      </div>
      <div class="canvas">
        <svg class="scene" viewBox="495 232 2065 1125">
          <path d="M796 784C796 770 842 770 842 784V820C842 832 796 832 796 820Z" fill="url(#gc)" stroke="#4a5254"/>
          <ellipse cx="819" cy="784" rx="23" ry="9" fill="#a4b0b3" stroke="#4a5254"/>
          <path d="M856 914 897 935 846 951 805 930Z" fill="#ffa23c"/>
          <path d="M805 930 846 951V1010L805 990Z" fill="#b8732e" stroke="#ffa23c" stroke-width="3"/>
          <path d="M846 951 897 935V995L846 1010Z" fill="#f2983e" stroke="#ffa23c" stroke-width="3"/>
          <path d="M1777 814 1818 833 1767 849 1726 830Z" fill="#a4b0b4" stroke="#444"/>
          <path d="M1726 830 1767 849V908L1726 889Z" fill="#6e7a7c" stroke="#444"/>
          <path d="M1767 849 1818 833V893L1767 908Z" fill="#95a1a3" stroke="#444"/>
          <path d="M573 1225 605 1215 632 1227 598 1237ZM573 1225V1263L598 1276 632 1265V1227M598 1237V1276" fill="#fff" stroke="#bbb" stroke-width="1.2"/>
          <path d="M600 1226V1195H597L602 1178 607 1195H604V1226Z" fill="#0038c8"/>
          <path d="M632 1233 648 1228 647 1225 660 1226 650 1234 649 1231 632 1238Z" fill="#2e9a3c"/>
          <path d="M616 1248 636 1259 638 1256 648 1266 634 1266 635 1263 614 1252Z" fill="#c42c2c"/>
          <text x="602" y="1174" class="ax az">Z</text>
          <text x="666" y="1230" class="ax ay">Y</text>
          <text x="654" y="1274" class="ax ax-x">X</text>
        </svg>

        <div class="dialog">
          <div class="dtitle">
            <svg class="dgear" viewBox="0 0 16 16"><circle cx="8" cy="8" r="4.2" fill="none" stroke="#fff" stroke-width="2.2"/><circle cx="8" cy="8" r="6.6" fill="none" stroke="#fff" stroke-width="2" stroke-dasharray="2.5 2.6"/></svg>
            <span class="dname">信息</span>
            <span class="dq">?</span>
            <svg class="dw" viewBox="0 0 14 14"><path d="M3 12H10" stroke="#fff" stroke-width="2"/></svg>
            <svg class="dw" viewBox="0 0 14 14"><rect x="2" y="2" width="10" height="10" fill="none" stroke="#fff" stroke-width="1.6"/></svg>
            <svg class="dw" viewBox="0 0 14 14"><path d="M2 2 12 12M12 2 2 12" stroke="#fff" stroke-width="2"/></svg>
          </div>
          <div class="dtools">
            <button class="dbtn"><svg viewBox="0 0 24 24"><path d="M2 2H17L20 5V22H2ZM7 2V8H15V2M5 13H13M5 16H9" fill="none" stroke="#444"/><path d="M21 11 23 13 13 23 10 23 10 21Z" fill="#eee" stroke="#333"/></svg></button>
            <button class="dbtn"><svg viewBox="0 0 24 24"><path d="M6 9V2H18V9M6 19H2V9H22V19H18M6 14H18V23H6Z" fill="none" stroke="#444"/></svg></button>
            <button class="dbtn"><svg viewBox="0 0 24 24"><circle cx="8" cy="4" r="3" fill="none" stroke="#444"/><circle cx="8" cy="20" r="3" fill="none" stroke="#444"/><path d="M9 7 10 13 10 17M10 13 22 5M10 13 22 15" fill="none" stroke="#444"/></svg></button>
            <button class="dbtn"><svg viewBox="0 0 24 24"><path d="M2 1H11V17H2ZM8 6H16L22 12V23H8Z" fill="none" stroke="#444"/><path d="M16 6V12H22" fill="none" stroke="#444"/></svg></button>
            <button class="dbtn"><svg viewBox="0 0 24 24"><path d="M2 4H17V22H2ZM6 4V1H13V4M8 10H16L22 15V23H8Z" fill="#efefef" stroke="#444"/></svg></button>
            <button class="dbtn"><svg viewBox="0 0 24 24"><path d="M3 3 21 21M21 3 3 21" stroke="#444"/></svg></button>
            <button class="dbtn"><svg viewBox="0 0 24 24"><path d="M5 1H1V23H5M19 1H23V23H19" fill="none" stroke="#e8821a" stroke-width="1.2"/><circle cx="12" cy="12" r="5" fill="none" stroke="#444"/><path d="M12 3V21M5 12H19" stroke="#444"/></svg></button>
            <button class="dbtn"><svg viewBox="0 0 24 24"><path d="M2 22V10L5 5V1H9V5L10 10V22ZM14 22V10L15 5V1H19V5L22 10V22ZM10 10H14M2 16H10M14 16H22" fill="none" stroke="#444"/></svg></button>
            <button class="dbtn wrap"><svg viewBox="0 0 24 24"><rect x="3" y="1" width="18" height="22" fill="#fff" stroke="#111" stroke-width="1.6"/><path d="M6 6H18M6 10H18M6 14H18M17 14V18H10M12 16 10 18 12 20" fill="none" stroke="#111"/></svg></button>
            <button class="dbtn"><svg viewBox="0 0 24 24"><path d="M12 3V21M3 12H21" stroke="#444"/></svg></button>
          </div>
          <div class="dbody">
            <p class="warn">Warning:</p>
            <p class="msg">D:\ProjectRelated\06Code\01NX\01cpp\code\NXOpenCpp\x64\Debug\UFModel.dll is compiled with a<br>newer version of the compiler [14.34] vs [14.20]<br>Expecting programs to be compiled at 14.20</p>
            <pre class="out">0获取的体JournalIdentifier = BLOCK(4)
1获取的体JournalIdentifier = BLOCK(5)
2获取的体JournalIdentifier = BLOCK(6)
3获取的体JournalIdentifier = CYLINDER(7)
4获取的体JournalIdentifier = CYLINDER(8)
5获取的体JournalIdentifier = CYLINDER(9)</pre>
          </div>
        </div>
      </div>
    </section>
  </main>

  <footer class="status"><span>CSDN @GimiGimmy</span></footer>
  <div class="strip"></div>
</div>
</body>
</html>
```

FILE: styles.css
```css
* { box-sizing: border-box; }
html, body { margin: 0; height: 100%; overflow: hidden; background: #fff; }
body { font-family: "Noto Sans CJK SC", "Noto Sans", sans-serif; font-size: 14px; color: #222; }
i, em { font-style: normal; }
.defs { position: absolute; }
.app { width: 2560px; height: 1389px; display: flex; flex-direction: column; }

/* triangles */
.tri { display: inline-block; width: 0; height: 0; border-left: 4px solid transparent; border-right: 4px solid transparent; border-top: 5px solid #222; flex: none; }
.tri-w { border-top-color: #fff; }

/* header */
.head { height: 62px; flex: none; background: linear-gradient(90deg, #03688e 0%, #04709a 50%, #0679a6 100%); color: #fff; }
.titlebar { height: 32px; display: flex; align-items: center; position: relative; padding-left: 4px; }
.logo { font-family: "Liberation Sans", sans-serif; font-weight: 700; font-size: 27px; width: 39px; line-height: 32px; letter-spacing: -.5px; flex: none; }
.qsep { width: 1px; height: 24px; background: #3e8eae; margin: 0 3px; flex: none; }
.qi { width: 18px; height: 24px; margin: 0 3px; flex: none; }
.qi.n { width: 16px; }
.qi.m14 { width: 14px; }
.qi.faded { opacity: .3; }
.titlebar .tri { margin: 0 4px 0 6px; }
.star { color: #f5b81c; font-size: 15px; margin: 0 3px 0 6px; line-height: 1; flex: none; }
.wintext { font-size: 15px; flex: none; }
.menu-more { width: 8px; height: 7px; margin-left: 3px; border-top: 1px solid #fff; position: relative; flex: none; }
.menu-more::after { content: ""; position: absolute; top: 2px; left: 0; border-left: 4px solid transparent; border-right: 4px solid transparent; border-top: 5px solid #fff; }
.apptitle { position: absolute; left: 1390px; top: 3px; font-size: 15px; line-height: 24px; }
.brand { position: absolute; left: 2380px; top: 5px; font-family: "Liberation Sans", sans-serif; font-weight: 700; font-size: 15px; line-height: 22px; letter-spacing: .1px; }
.winbtns { position: absolute; left: 2477px; top: 8px; display: flex; gap: 16px; }
.wb { width: 14px; height: 14px; }
.tabrow { height: 30px; display: flex; align-items: flex-start; position: relative; }
.tabs { display: flex; padding-left: 19px; height: 30px; }
.tab { font-size: 16px; line-height: 28px; padding: 0 16px; color: #fff; white-space: nowrap; }
.tab.file { padding: 0 26px 0 0; }
.tab.active { color: #ffd05a; border-bottom: 2px solid #ffc95a; height: 28px; }
.searchbox { position: absolute; left: 2230px; top: 1px; width: 220px; height: 26px; background: #fff; border: 1px solid #777; color: #b4b4b4; font-size: 14px; line-height: 24px; display: flex; justify-content: space-between; padding-right: 1px; }
.mag { width: 18px; height: 18px; margin: 3px 2px 0 0; }
.helpers { position: absolute; left: 2460px; top: 6px; display: flex; align-items: center; gap: 10px; }
.hb { width: 16px; height: 16px; }
.helpq { width: 15px; height: 15px; border: 1px solid #fff; border-radius: 50%; font-size: 11px; line-height: 13px; text-align: center; font-family: "Liberation Sans", sans-serif; }
.helpex { font-size: 20px; line-height: 20px; margin-left: 6px; font-family: "Liberation Sans", sans-serif; }

/* ribbon */
.ribbon { height: 108px; flex: none; display: flex; border-bottom: 1px solid #dcdcdc; padding-top: 5px; padding-bottom: 1px; position: relative; }
.group { height: 100%; display: flex; flex-direction: column; border-right: 1px solid #dcdcdc; flex: none; }
.g-con { width: 120px; } .g-base { width: 496px; } .g-sync { width: 258px; }
.g-std { width: 105px; } .g-gear { width: 51px; } .g-spring { width: 58px; } .g-add { width: 52px; }
.g-model { width: 110px; } .g-ex { width: 30px; } .g-dim { width: 287px; }
.tools { flex: 1; display: flex; align-items: flex-start; min-height: 0; }
.pad-con { padding-left: 13px; }
.pad-big { padding-left: 9px; }
.big { display: flex; flex-direction: column; align-items: center; flex: none; padding-top: 1px; line-height: 20px; white-space: nowrap; }
.bi { width: 32px; height: 32px; display: block; margin-bottom: 4px; }
.w40 { width: 40px; } .w41 { width: 41px; } .w43 { width: 43px; } .w48 { width: 48px; } .w49 { width: 49px; } .w56 { width: 56px; }
.drop { margin-top: 4px; }
.stack { display: flex; flex-direction: column; margin-left: 9px; }
.srow { height: 38px; display: flex; align-items: center; gap: 7px; white-space: nowrap; }
.si { width: 20px; height: 20px; flex: none; }
.glabel { height: 20px; display: flex; align-items: center; padding-right: 7px; color: #06739f; white-space: nowrap; flex: none; }
.glabel b { flex: 1; font-weight: 400; text-align: center; font-size: 14px; overflow: hidden; padding-right: 5px; }
.glabel.narrow b { text-align: left; padding: 0 0 0 2px; }
.minis { flex: 1; display: flex; flex-direction: column; }
.p3 { padding-left: 3px; } .p4 { padding-left: 4px; } .p5 { padding-left: 5px; }
.mrow { height: 32px; display: flex; align-items: center; }
.m { width: 23px; height: 20px; flex: none; display: block; }
.vs { width: 1px; height: 20px; background: #ccc; margin: 0 3px; flex: none; }
.mx, .mbox, .mpar, .fit, .fit2, .tol { font-family: "Liberation Sans", sans-serif; text-align: center; }
.mx { font-size: 15px; line-height: 20px; color: #111; }
.mbox { font-size: 13px; line-height: 16px; color: #111; border: 2px solid #9a1c1c; width: 19px; margin: 0 2px; }
.mpar { font-size: 15px; line-height: 20px; color: #222; }
.tol { display: flex; flex-direction: column; align-items: center; font-size: 9px; line-height: 9px; color: #111; transform: scaleX(.8); }
.tol u { text-decoration: none; }
.tol s { text-decoration: none; color: #b02020; font-size: 8px; line-height: 7px; }
.tol s.dimg { color: #666; }
.fit { font-size: 9px; line-height: 20px; color: #1c34b8; transform: scaleX(.75); }
.fit2 { font-size: 9px; line-height: 10px; color: #1c34b8; white-space: nowrap; transform: scaleX(.72); }
.scope { display: flex; flex-direction: column; align-items: center; }
.scope svg { width: 16px; height: 9px; }
.scope em { font-family: "Liberation Sans", sans-serif; font-size: 8px; line-height: 10px; color: #222; }
.ribbon-drop { position: absolute; left: 2545px; top: 94px; }

/* toolbar */
.toolbar { height: 32px; flex: none; display: flex; align-items: center; border-bottom: 2px solid #aaa; padding-left: 12px; position: relative; }
.hamb { width: 11px; height: 10px; border-top: 1px solid #444; border-bottom: 1px solid #444; position: relative; flex: none; }
.hamb::after { content: ""; position: absolute; left: 0; right: 0; top: 3px; height: 1px; background: #444; }
.menutxt { margin-left: 7px; font-size: 14px; white-space: nowrap; }
.ul { text-decoration: underline; }
.toolbar > .tri { margin-left: 4px; }
.tsep { width: 1px; height: 24px; background: #ddd; margin-left: 11px; flex: none; }
.select { height: 26px; border: 1px solid #777; display: flex; align-items: center; justify-content: space-between; padding: 0 6px 0 3px; font-size: 14px; flex: none; }
.s1 { width: 182px; margin-left: 12px; }
.s2 { width: 192px; }
.funnel { width: 20px; height: 24px; margin: 0 6px 0 9px; flex: none; }
.toolbar > .toolbar-drop { position: absolute; left: 2545px; top: 15px; margin: 0; }

/* main */
.main { flex: 1; display: flex; min-height: 0; border-bottom: 2px solid #aaa; }
.rail { width: 32px; flex: none; background: #dcdcdc; border-right: 1px solid #a0a0a0; display: flex; flex-direction: column; align-items: center; padding-top: 6px; }
.ri { width: 24px; height: 24px; flex: none; margin-bottom: 18px; position: relative; left: 1px; }
.r-gear { width: 14px; height: 14px; margin-bottom: 31px; }
.r-tall { margin-bottom: 9px; }
.ractive { width: 31px; height: 45px; margin-left: 2px; flex: none; background: #fff; border: 1px solid #aaa; border-right: 0; margin-bottom: 7px; display: flex; align-items: center; justify-content: center; position: relative; left: 1px; }
.ri-in { width: 24px; height: 24px; }
.r-book { margin-bottom: 17px; }
.r-gap { margin-top: 10px; margin-bottom: 19px; }
.r-tools { margin-top: 4px; }

.nav { width: 463px; flex: none; border-right: 2px solid #aaa; padding: 0 8px 0 6px; display: flex; flex-direction: column; }
.navhead { height: 31px; display: flex; align-items: center; justify-content: space-between; padding: 0 7px 0 4px; font-size: 15px; flex: none; }
.maxbtn { width: 14px; height: 13px; border: 1px solid #222; border-top-width: 2px; }
.table { border: 1px solid #ddd; flex: none; height: 1000px; padding: 1px; display: flex; flex-direction: column; background: #fff; }
.thead { display: grid; grid-template-columns: 304px 88px 1fr; height: 24px; background: #f0f0f0; border-bottom: 1px solid #ddd; flex: none; }
.th { font-size: 15px; line-height: 23px; border-right: 1px solid #ddd; padding-left: 6px; white-space: nowrap; position: relative; }
.th:last-child { border-right: 0; }
.sort { position: absolute; left: 54px; top: 8px; border-left: 6px solid transparent; border-right: 6px solid transparent; border-bottom: 6px solid #111; }
.tree { flex: 1; min-height: 0; overflow: hidden; position: relative; }
.row { display: grid; grid-template-columns: 304px 88px 1fr; height: 24px; border-bottom: 1px solid #eee; }
.row:nth-of-type(even) { background: #fff; }
.tree > .row:nth-of-type(odd) { background: #fafafa; }
.c { border-right: 1px solid #eee; display: flex; align-items: center; min-width: 0; }
.c:last-child { border-right: 0; }
.name { padding-left: 5px; font-size: 15px; white-space: nowrap; }
.name.lv { padding-left: 29px; }
.exp { width: 10px; height: 10px; flex: none; margin-right: 2px; position: relative; background: #fff; border: 1px solid #bbb; z-index: 1; }
.exp.none { border: 0; border-bottom: 1px dotted #999; height: 5px; margin-bottom: 5px; background: transparent; }
.exp.plus::before, .exp.minus::before { content: ""; position: absolute; left: 1px; right: 1px; top: 3px; height: 2px; background: #444; transform: scaleY(.6); }
.exp.plus::after { content: ""; position: absolute; top: 1px; bottom: 1px; left: 3px; width: 2px; background: #444; transform: scaleX(.6); }
.dash { width: 7px; height: 1px; border-top: 1px dotted #999; flex: none; }
.i1 { width: 18px; height: 16px; flex: none; }
.i1.dot { height: 18px; }
.i2 { width: 16px; height: 16px; flex: none; }
.t0 { margin-left: 3px; }
.t1 { margin-left: 4px; }
.t2 { margin-left: 4px; }
.t3 { margin-left: 3px; color: #222; }
.red { color: #f2405a; }
.strong { font-weight: 700; color: #111; }
.ok svg { width: 16px; height: 15px; margin-left: 4px; }
.cur svg { width: 8px; height: 16px; margin-left: 8px; }
.vline { position: absolute; width: 1px; border-left: 1px dotted #999; }
.v1 { left: 9px; top: 12px; height: 256px; }
.v2 { left: 28px; top: 72px; height: 180px; }
.v3 { left: 28px; top: 288px; height: 132px; }
.hscroll { height: 21px; background: #f0f0f0; flex: none; position: relative; padding: 7px 0 0 21px; border-top: 1px solid #fff; }
.thumb { display: block; width: 259px; height: 6px; background: #888; }
.splitter { height: 5px; margin-top: 1px; background: #cfcfcf; border: 1px solid #aaa; flex: none; }
.acc { height: 28px; border-bottom: 3px solid #d2d2d2; color: #06739f; font-size: 17px; line-height: 24px; padding-left: 12px; display: flex; align-items: center; gap: 10px; flex: none; }
.arrow { border-top: 5px solid transparent; border-bottom: 5px solid transparent; border-left: 6px solid #06658a; flex: none; }

/* graphics */
.graphics { flex: 1; display: flex; flex-direction: column; min-width: 0; border-right: 1px solid #ccc; }
.gtabs { height: 30px; flex: none; display: flex; border-bottom: 2px solid #036088; padding-left: 5px; }
.gtab { height: 28px; display: flex; align-items: center; gap: 4px; font-size: 15px; width: 103px; white-space: nowrap; color: #222; }
.gtab.on { width: 220px; background: #036088; color: #fff; padding-left: 7px; }
.gtab.on > span { margin-left: 2px; font-size: 15px; width: 157px; }
.gt-ic { width: 14px; height: 19px; flex: none; }
.gt-doc { width: 10px; height: 10px; flex: none; margin-left: 2px; }
.gt-x { width: 9px; height: 9px; flex: none; margin-left: 7px; }
.canvas { flex: 1; position: relative; min-height: 0; overflow: hidden; }
.scene { position: absolute; left: 0; top: 0; width: 2065px; height: 1125px; }
.ax { font-family: "Liberation Sans", sans-serif; font-size: 12px; text-anchor: middle; }
.az { fill: #6a7ce0; } .ay { fill: #58a868; } .ax-x { fill: #d85050; }

/* dialog */
.dialog { position: absolute; left: 394px; top: 288px; width: 757px; height: 600px; background: #efefef; border: 1px solid #aaa; border-top: 0; display: flex; flex-direction: column; }
.dtitle { height: 33px; flex: none; background: #036088; color: #fff; display: flex; align-items: center; padding-left: 8px; margin: 0 -1px; }
.dgear { width: 14px; height: 14px; flex: none; }
.dname { font-size: 15px; margin-left: 10px; flex: 1; }
.dq { font-family: "Liberation Sans", sans-serif; font-weight: 700; font-size: 16px; width: 14px; margin-right: 13px; text-align: center; }
.dw { width: 14px; height: 14px; margin-right: 13px; flex: none; }
.dw:last-child { margin-right: 9px; }
.dtools { display: flex; gap: 2px; padding: 5px 0 0 10px; height: 39px; flex: none; }
.dbtn { width: 32px; height: 32px; padding: 4px; border: 1px solid #999; background: #efefef; display: block; }
.dbtn svg { display: block; width: 22px; height: 22px; }
.dbtn.wrap { background: #ffd678; border-color: #ffd678; }
.dbody { margin: 0 10px; height: 513px; border: 1px solid #666; border-top-width: 2px; padding: 15px 9px 0 10px; font-family: "Liberation Sans", sans-serif; font-size: 15px; line-height: 17px; color: #222; }
.dbody p { margin: 0; white-space: nowrap; }
.warn { font-weight: 700; color: #111; }
.dbody .msg { margin-top: 15px; }
.out { margin: 15px 0 0; background: #fff; border-top: 1px solid #e4e4e4; border-bottom: 1px solid #e4e4e4; width: 714px; height: 137px; padding: 6px 0 0 5px; font-family: "DejaVu Sans Mono", "Noto Sans CJK SC", monospace; font-size: 15px; line-height: 21px; color: #222; }

/* footer */
.status { height: 23px; flex: none; background: #fff; border-bottom: 1px solid #bbb; display: flex; justify-content: flex-end; align-items: center; padding: 3px 16px 0 0; font-family: "Liberation Sans", sans-serif; font-size: 14px; color: #9a9a9a; }
.strip { height: 8px; flex: none; background: linear-gradient(90deg, #eaf2fb, #dce8f8 60%, #cfdcf6); }
```
